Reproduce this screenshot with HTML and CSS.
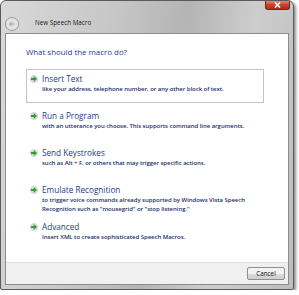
FILE: index.html
```html
<!DOCTYPE html>
<html lang="en">
<head>
    <meta charset="UTF-8">
    <meta name="viewport" content="width=device-width, initial-scale=1.0">
    <title>New Speech Macro</title>
    <link rel="stylesheet" href="styles.css">
</head>
<body>
    <div class="window">
        <div class="titlebar">
            <span class="back">
                <svg width="14" height="14" viewBox="0 0 14 14">
                    <circle cx="7" cy="7" r="6.5" fill="#e4e4e4" stroke="#9a9a9a"/>
                    <path d="M9.5 7H5M6.8 4.8L4.6 7l2.2 2.2" fill="none" stroke="#b5b5b5" stroke-width="1.4"/>
                </svg>
            </span>
            <span class="caption">New Speech Macro</span>
            <span class="close">
                <svg width="7" height="6" viewBox="0 0 7 6">
                    <path d="M1 0.5l5 5M6 0.5l-5 5" stroke="#fff" stroke-width="1.6"/>
                </svg>
            </span>
        </div>

        <div class="panel">
            <div class="content">
                <h1>What should the macro do?</h1>

                <div class="options">
                    <div class="option selected">
                        <span class="arrow"></span>
                        <div>
                            <div class="opt-title">Insert Text</div>
                            <div class="opt-desc">like your address, telephone number, or any other block of text.</div>
                        </div>
                    </div>
                    <div class="option">
                        <span class="arrow"></span>
                        <div>
                            <div class="opt-title">Run a Program</div>
                            <div class="opt-desc">with an utterance you choose. This supports command line arguments.</div>
                        </div>
                    </div>
                    <div class="option">
                        <span class="arrow"></span>
                        <div>
                            <div class="opt-title">Send Keystrokes</div>
                            <div class="opt-desc">such as Alt + F, or others that may trigger specific actions.</div>
                        </div>
                    </div>
                    <div class="option">
                        <span class="arrow"></span>
                        <div>
                            <div class="opt-title">Emulate Recognition</div>
                            <div class="opt-desc">to trigger voice commands already supported by Windows Vista Speech<br>Recognition such as "mousegrid" or "stop listening."</div>
                        </div>
                    </div>
                    <div class="option">
                        <span class="arrow"></span>
                        <div>
                            <div class="opt-title">Advanced</div>
                            <div class="opt-desc">Insert XML to create sophisticated Speech Macros.</div>
                        </div>
                    </div>
                </div>
            </div>

            <div class="footer">
                <button class="btn">Cancel</button>
            </div>
        </div>
    </div>
</body>
</html>
```

FILE: styles.css
```css
body {
    margin: 0;
    background: #fff;
    font-family: "Open Sans", "Noto Sans", sans-serif;
}
.window {
    width: 294px;
    height: 290px;
    box-sizing: border-box;
    border: 1px solid #5a5a5a;
    border-radius: 6px 6px 2px 2px;
    background: linear-gradient(100deg, #d9d9d9 0%, #c6c6c6 35%, #b4b4b4 55%, #cdcdcd 75%, #bdbdbd 100%);
    box-shadow: 2px 2px 3px rgba(0, 0, 0, 0.45);
    display: flex;
    flex-direction: column;
    overflow: hidden;
}
.titlebar {
    height: 32px;
    position: relative;
    display: flex;
    align-items: flex-end;
    padding: 0 0 2px 4px;
    box-sizing: border-box;
}
.back {
    width: 14px;
    height: 14px;
    display: flex;
}
.caption {
    margin-left: 16px;
    margin-bottom: 4px;
    font-size: 6.3px;
    color: #1a1a1a;
}
.close {
    position: absolute;
    top: -1px;
    right: 3px;
    width: 25px;
    height: 10px;
    border: 1px solid #6b2a20;
    border-top: none;
    border-radius: 0 0 3px 3px;
    background: linear-gradient(#e8a090, #c8452e 50%, #b12c14);
    display: flex;
    align-items: center;
    justify-content: center;
    box-sizing: border-box;
}
.panel {
    flex: 1;
    margin: 0 4px 4px 4px;
    border: 1px solid #8c8c8c;
    background: #fff;
    display: flex;
    flex-direction: column;
}
.content {
    flex: 1;
    padding: 10px 0 0 20px;
}
h1 {
    margin: 0;
    font-size: 7.9px;
    font-weight: normal;
    line-height: 16px;
    color: #1f3a93;
}
.options {
    margin-top: 9px;
    display: flex;
    flex-direction: column;
    gap: 3px;
}
.option {
    width: 238px;
    height: 34px;
    box-sizing: border-box;
    border: 1px solid transparent;
    padding: 3px 0 0 3px;
    display: flex;
    gap: 4px;
}
.option.selected {
    border-color: #c4c4c4;
}
.arrow {
    width: 8px;
    height: 8px;
    margin-top: 2px;
    border-radius: 50%;
    background: radial-gradient(circle, #e0e0e0 40%, #d0d0d0);
    position: relative;
}
.arrow::after {
    content: "";
    position: absolute;
    left: 1px;
    top: 1px;
    width: 6px;
    height: 6px;
    background: #2da12d;
    clip-path: polygon(0 35%, 45% 35%, 45% 0, 100% 50%, 45% 100%, 45% 65%, 0 65%);
}
.opt-title {
    font-size: 8.2px;
    line-height: 12px;
    color: #1c3a8c;
}
.opt-desc {
    font-size: 6px;
    line-height: 9px;
    font-weight: 600;
    color: #1b2f6e;
    letter-spacing: -0.05px;
    white-space: nowrap;
}
.footer {
    height: 21px;
    border-top: 1px solid #dfdfdf;
    background: #f0f0f0;
    display: flex;
    justify-content: flex-end;
    align-items: center;
    padding-right: 3px;
}
.btn {
    width: 38px;
    height: 13px;
    padding: 0;
    font-family: inherit;
    font-size: 6.3px;
    color: #111;
    border: 1px solid #8e8f8f;
    border-radius: 2px;
    background: linear-gradient(#f2f2f2 50%, #dcdcdc 50%, #cfcfcf);
}
```
